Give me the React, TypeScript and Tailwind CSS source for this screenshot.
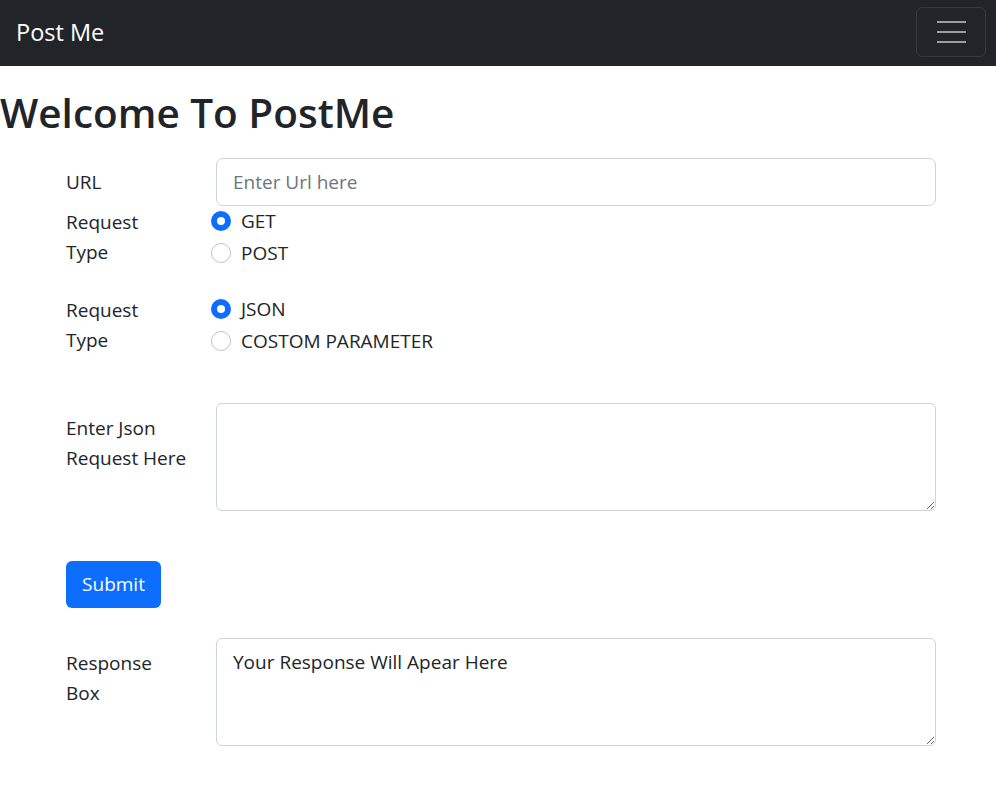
import React from "react";

function Radio({ checked, label }: { checked: boolean; label: string }) {
  return (
    <div className="flex h-[32px] items-center">
      {checked ? (
        <span className="flex h-[20px] w-[20px] items-center justify-center rounded-full bg-[#0d6efd]">
          <span className="h-[8px] w-[8px] rounded-full bg-white" />
        </span>
      ) : (
        <span className="h-[20px] w-[20px] rounded-full border border-[#bfc2c5] bg-white" />
      )}
      <span className="ml-[10px] leading-[30px]">{label}</span>
    </div>
  );
}

export default function App() {
  return (
    <div
      className="min-h-[792px] bg-white text-[19px] text-[#212529]"
      style={{ fontFamily: '"Open Sans", "Noto Sans", sans-serif' }}
    >
      <nav className="flex h-[66px] items-center justify-between bg-[#212529] pl-4 pr-[10px]">
        <span className="text-[23.5px] leading-none text-white">Post Me</span>
        <button className="mt-[-2px] flex h-[50px] w-[70px] flex-col items-center justify-center gap-[8px] rounded-[6px] border border-white/10">
          <span className="h-[2px] w-[29px] bg-white/55" />
          <span className="h-[2px] w-[29px] bg-white/55" />
          <span className="h-[2px] w-[29px] bg-white/55" />
        </button>
      </nav>

      <h1 className="mt-[22px] text-[40.5px] font-semibold leading-[50px]">Welcome To PostMe</h1>

      <form className="ml-[66px] mt-[20px] w-[870px]">
        <div className="flex h-[48px]">
          <label className="flex w-[150px] items-center">URL</label>
          <input
            className="h-[48px] flex-1 rounded-[7px] border border-[#ced4da] px-[16px] text-[19px] placeholder:text-[#6c757d] outline-none"
            placeholder="Enter Url here"
          />
        </div>

        <div className="flex">
          <div className="mt-[1px] w-[145px] leading-[30px]">
            Request
            <br />
            Type
          </div>
          <div className="mt-[-1px] flex flex-col">
            <Radio checked label="GET" />
            <Radio checked={false} label="POST" />
          </div>
        </div>

        <div className="mt-[25px] flex">
          <div className="mt-[1px] w-[145px] leading-[30px]">
            Request
            <br />
            Type
          </div>
          <div className="mt-[-1px] flex flex-col">
            <Radio checked label="JSON" />
            <Radio checked={false} label="COSTOM PARAMETER" />
          </div>
        </div>

        <div className="mt-[46px] flex">
          <div className="w-[150px] pt-[10px] leading-[30px]">
            Enter Json
            <br />
            Request Here
          </div>
          <textarea className="h-[108px] flex-1 resize-y rounded-[6px] border border-[#ced4da] px-[16px] py-[8px] text-[19px] leading-[30px] outline-none" />
        </div>

        <button
          type="button"
          className="mt-[50px] h-[47px] w-[95px] rounded-[6px] bg-[#0d6efd] text-[19px] text-white"
        >
          Submit
        </button>

        <div className="mt-[30px] flex">
          <div className="w-[150px] pt-[10px] leading-[30px]">
            Response
            <br />
            Box
          </div>
          <textarea
            className="h-[108px] flex-1 resize-y rounded-[6px] border border-[#ced4da] px-[16px] py-[8px] text-[19px] leading-[30px] text-[#212529] outline-none"
            defaultValue="Your Response Will Apear Here"
          />
        </div>
      </form>
    </div>
  );
}
